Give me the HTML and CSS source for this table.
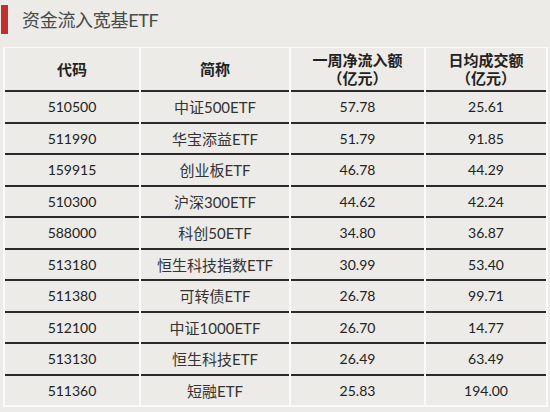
FILE: index.html
```html
<!DOCTYPE html>
<html lang="zh-CN">
<head>
<meta charset="utf-8">
<title>资金流入宽基ETF</title>
<link rel="stylesheet" href="styles.css">
</head>
<body>
<div class="heading">
	<div class="bar"></div>
	<h1 class="title">资金流入宽基ETF</h1>
</div>

<table class="etftable">
	<thead>
		<tr>
			<th class="c1">代码</th>
			<th class="c2">简称</th>
			<th class="c3">一周净流入额<br>（亿元）</th>
			<th class="c4">日均成交额<br>（亿元）</th>
		</tr>
	</thead>
	<tbody>
		<tr><td>510500</td><td class="name">中证500ETF</td><td>57.78</td><td>25.61</td></tr>
		<tr><td>511990</td><td class="name">华宝添益ETF</td><td>51.79</td><td>91.85</td></tr>
		<tr><td>159915</td><td class="name">创业板ETF</td><td>46.78</td><td>44.29</td></tr>
		<tr><td>510300</td><td class="name">沪深300ETF</td><td>44.62</td><td>42.24</td></tr>
		<tr><td>588000</td><td class="name">科创50ETF</td><td>34.80</td><td>36.87</td></tr>
		<tr><td>513180</td><td class="name">恒生科技指数ETF</td><td>30.99</td><td>53.40</td></tr>
		<tr><td>511380</td><td class="name">可转债ETF</td><td>26.78</td><td>99.71</td></tr>
		<tr><td>512100</td><td class="name">中证1000ETF</td><td>26.70</td><td>14.77</td></tr>
		<tr><td>513130</td><td class="name">恒生科技ETF</td><td>26.49</td><td>63.49</td></tr>
		<tr><td>511360</td><td class="name">短融ETF</td><td>25.83</td><td>194.00</td></tr>
	</tbody>
</table>
</body>
</html>
```

FILE: styles.css
```css
body {
	margin: 0;
	background: #ecebe7;
	font-family: Lato, "Noto Sans CJK SC", sans-serif;
	color: #222;
}
.heading {
	display: flex;
	align-items: center;
	height: 38px;
	padding-top: 0;
}
.bar {
	width: 7px;
	height: 29px;
	margin-left: 1px;
	background: #c0302f;
}
.title {
	margin: 0 0 0 14px;
	font-size: 18px;
	font-weight: normal;
	color: #4a4a4a;
	letter-spacing: -0.3px;
}
.etftable {
	margin: 9px 0 0 3px;
	width: 545px;
	border-collapse: separate;
	border-spacing: 2px 0;
	background: #fafafa;
	border-top: 1px solid #fafafa;
	border-bottom: 2px solid #fafafa;
	table-layout: fixed;
}
.etftable th,
.etftable td {
	background: #ecebe7;
	text-align: center;
	padding: 0;
	border-bottom: 2px solid #2a2a2a;
}
.etftable th {
	height: 42px;
	font-size: 15px;
	line-height: 18px;
	font-weight: bold;
	color: #222;
}
.etftable td {
	height: 29.5px;
	font-size: 14px;
	color: #222;
}
.etftable td.name {
	font-size: 15px;
	color: #333;
}
.etftable tbody tr:last-child td {
	border-bottom: none;
}
.c1 { width: 134px; }
.c2 { width: 148px; }
.c3 { width: 133px; }
.c4 { width: 120px; }
```
